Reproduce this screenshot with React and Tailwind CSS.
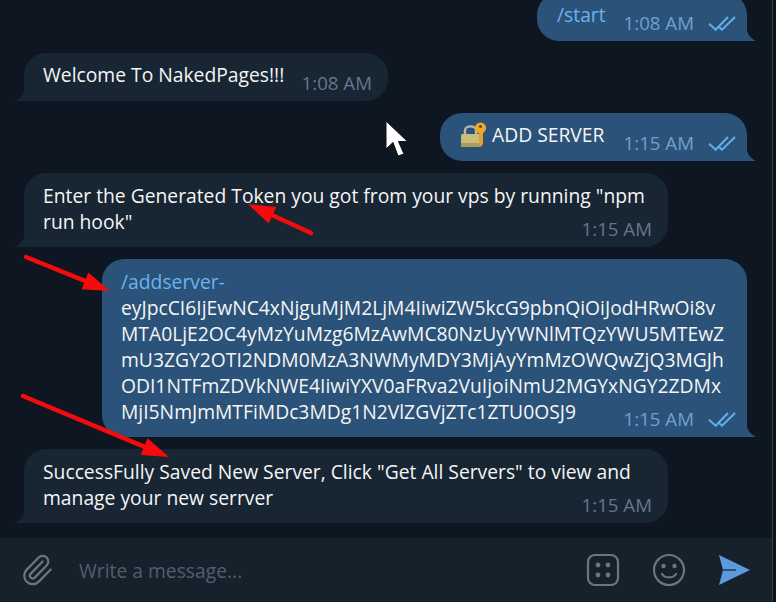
const Ticks = () => (
  <svg width="28" height="16" viewBox="0 0 28 16" fill="none" stroke="#62b0ea" strokeWidth="2" className="shrink-0">
    <path d="M1 8.700 7.700 14.700 20 2" />
    <path d="M11 12 14 14.700 27 2" />
  </svg>
);

const LockKey = () => (
  <svg width="26" height="26" viewBox="0 0 26 26" className="inline-block align-top">
    <path d="M5 13V8.500C5 3 16 3 16 8.500V13" fill="none" stroke="#b9b9a8" strokeWidth="2.400" />
    <rect x="1" y="12" width="19" height="13" rx="1.500" fill="#c9bd78" />
    <rect x="1" y="21" width="19" height="4" fill="#a99e5c" />
    <path d="M19 9h4v13l-2 3-2-2z" fill="#e3a02c" />
    <circle cx="20.500" cy="6" r="5.500" fill="#eda92f" />
    <circle cx="20.500" cy="4.500" r="1.600" fill="#6b4a10" />
  </svg>
);

const Bubble = ({ out, time, className = "", inline, children }) => (
  <div className={`relative rounded-[22px] ${out ? "self-end mr-[29px] rounded-br-none bg-[#2b5278]" : "self-start ml-6 rounded-bl-none bg-[#182533]"} ${className}`}>
    {/* tail */}
    {out ? (
      <svg width="10" height="16" viewBox="0 0 10 16" className="absolute right-[-9px] bottom-0">
        <path d="M0 0C.5 8 4 13 10 16H0z" fill="#2b5278" />
      </svg>
    ) : (
      <svg width="10" height="16" viewBox="0 0 10 16" className="absolute left-[-9px] bottom-0">
        <path d="M10 0C9.500 8 6 13 0 16H10z" fill="#182533" />
      </svg>
    )}
    {children}
    <div className={`flex items-center justify-end gap-[14px] text-[18.7px] leading-[26px] ${out ? "text-[#6ea2cf]" : "text-[#62788d]"} ${inline ? "mt-[12px]" : "mt-[-19px]"}`}>
      <span>{time}</span>
      {out && <Ticks />}
    </div>
  </div>
);

const Arrow = ({ x1, y1, x2, y2, w, h, left, top }) => {
  const dx = x2 - x1;
  const dy = y2 - y1;
  const len = Math.hypot(dx, dy);
  const ux = dx / len;
  const uy = dy / len;
  const bx = x2 - ux * 27;
  const by = y2 - uy * 27;
  return (
    <svg width={w} height={h} viewBox={`${left} ${top} ${w} ${h}`} className="absolute" style={{ left, top }}>
      <line x1={x1} y1={y1} x2={bx} y2={by} stroke="#f40c0c" strokeWidth="4.500" strokeLinecap="round" />
      <path d={`M${x2} ${y2}L${bx - uy * 9} ${by + ux * 9}L${bx + uy * 9} ${by - ux * 9}z`} fill="#f40c0c" />
    </svg>
  );
};

export default function App() {
  return (
    <div className="relative flex h-[602px] w-[776px] flex-col overflow-hidden bg-[#0e1621] font-['Open_Sans',sans-serif] text-[19.3px] leading-[26px] text-[#f5f5f5]">
      <div className="flex min-h-0 flex-1 flex-col justify-end gap-3 overflow-hidden pb-[15px]">
        <Bubble out inline time="1:08 AM" className="flex h-12 w-[210px] shrink-0 items-center pl-[20px] pr-[11px]">
          <span className="mt-[-5px] text-[#6ab2f2]">/start</span>
          <div className="flex-1" />
        </Bubble>
        <Bubble inline time="1:08 AM" className="flex h-12 w-[364px] shrink-0 items-center pl-[19px] pr-[16px]">
          <span className="mt-[-4px]">Welcome To NakedPages!!!</span>
          <div className="flex-1" />
        </Bubble>
        <Bubble out inline time="1:15 AM" className="flex h-12 w-[307px] shrink-0 items-center pl-[20px] pr-[11px]">
          <span className="mt-[-4px] flex items-center gap-[6px]"><LockKey />ADD SERVER</span>
          <div className="flex-1" />
        </Bubble>
        <Bubble time="1:15 AM" className="h-[74px] w-[644px] shrink-0 px-[19px] pt-[10px] pr-[16px]">
          <div>Enter the Generated Token you got from your vps by running "npm<br />run hook"</div>
        </Bubble>
        <Bubble out time="1:15 AM" className="h-[178px] w-[645px] shrink-0 pl-[19px] pr-[11px] pt-[10px]">
          <div>
            <span className="text-[#6ab2f2]">/addserver-</span><br />
            eyJpcCI6IjEwNC4xNjguMjM2LjM4IiwiZW5kcG9pbnQiOiJodHRwOi8v<br />
            MTA0LjE2OC4yMzYuMzg6MzAwMC80NzUyYWNlMTQzYWU5MTEwZ<br />
            mU3ZGY2OTI2NDM0MzA3NWMyMDY3MjAyYmMzOWQwZjQ3MGJh<br />
            ODI1NTFmZDVkNWE4IiwiYXV0aFRva2VuIjoiNmU2MGYxNGY2ZDMx<br />
            MjI5NmJmMTFiMDc3MDg1N2VlZGVjZTc1ZTU0OSJ9
          </div>
        </Bubble>
        <Bubble time="1:15 AM" className="h-[74px] w-[644px] shrink-0 px-[19px] pt-[10px] pr-[16px]">
          <div>SuccessFully Saved New Server, Click "Get All Servers" to view and<br />manage your new serrver</div>
        </Bubble>
      </div>

      {/* composer */}
      <div className="flex h-[64px] shrink-0 items-center bg-[#17212b] pl-[20px] pr-[26px]">
        <svg width="34" height="34" viewBox="0 0 24 24" fill="none" stroke="#6b7680" strokeWidth="1.600" strokeLinecap="round" strokeLinejoin="round" className="shrink-0">
          <path d="m16 6-8.414 8.586a2 2 0 0 0 2.829 2.829l8.414-8.586a4 4 0 1 0-5.657-5.657l-8.379 8.551a6 6 0 1 0 8.485 8.485l8.379-8.551" />
        </svg>
        <span className="ml-[25px] mt-[1px] flex-1 text-[#4d5f70]">Write a message...</span>
        <svg width="34" height="34" viewBox="0 0 34 34" className="shrink-0">
          <rect x="2" y="2" width="30" height="30" rx="7" fill="none" stroke="#6b7680" strokeWidth="2.200" />
          <circle cx="12" cy="12" r="2.400" fill="#6b7680" />
          <circle cx="22" cy="12" r="2.400" fill="#6b7680" />
          <circle cx="12" cy="22" r="2.400" fill="#6b7680" />
          <circle cx="22" cy="22" r="2.400" fill="#6b7680" />
        </svg>
        <svg width="34" height="34" viewBox="0 0 34 34" fill="none" stroke="#6b7680" strokeWidth="2.200" strokeLinecap="round" className="ml-[32px] shrink-0">
          <circle cx="17" cy="17" r="15" />
          <circle cx="11.500" cy="13" r="2.200" fill="#6b7680" stroke="none" />
          <circle cx="22.500" cy="13" r="2.200" fill="#6b7680" stroke="none" />
          <path d="M10 21c3 4.500 11 4.500 14 0" />
        </svg>
        <svg width="32" height="32" viewBox="0 0 32 32" className="ml-[32px] shrink-0">
          <path d="M1 1 32 16 1 31 5 16z" fill="#5b9bdc" />
          <path d="M5 16H18" stroke="#17212b" strokeWidth="1.200" />
        </svg>
      </div>

      {/* window edge */}
      <div className="absolute right-0 top-0 h-full w-[4px] border-l border-[#3a3f45] bg-[#101419]" />

      {/* annotations */}
      <Arrow x1={311} y1={233} x2={248} y2={204} left={240} top={196} w={80} h={46} />
      <Arrow x1={26} y1={257} x2={110} y2={291} left={18} top={250} w={100} h={48} />
      <Arrow x1={23} y1={396} x2={169} y2={457} left={16} top={390} w={160} h={74} />

      {/* mouse pointer */}
      <svg width="24" height="38" viewBox="0 0 24 38" className="absolute left-[385px] top-[120px]">
        <path d="M1 1V29L8 22.500 13 36 19 34 13.500 21.500H22.500z" fill="#fff" stroke="#111" strokeWidth="1" />
      </svg>
    </div>
  );
}
